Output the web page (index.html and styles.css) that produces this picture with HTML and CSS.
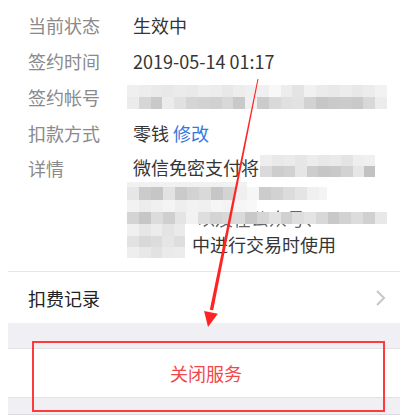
FILE: index.html
```html
<!DOCTYPE html>
<html lang="zh-CN">
<head>
<meta charset="utf-8">
<title>免密支付</title>
<link rel="stylesheet" href="styles.css">
</head>
<body>
<div class="page">
  <div class="info">
    <div class="row"><span class="label">当前状态</span><span class="value">生效中</span></div>
    <div class="row"><span class="label">签约时间</span><span class="value">2019-05-14 01:17</span></div>
    <div class="row"><span class="label">签约帐号</span>
      <span class="value">
        <svg class="mosaic-account" viewBox="0 0 22 2" preserveAspectRatio="none" shape-rendering="crispEdges">
          <rect x="0" y="0" width="1" height="1" fill="#efefef"/><rect x="1" y="0" width="1" height="1" fill="#ededed"/><rect x="2" y="0" width="1" height="1" fill="#eaeaea"/><rect x="3" y="0" width="1" height="1" fill="#e8e8e8"/><rect x="4" y="0" width="1" height="1" fill="#ebebeb"/><rect x="5" y="0" width="1" height="1" fill="#e9e9e9"/><rect x="6" y="0" width="1" height="1" fill="#eeeeee"/><rect x="7" y="0" width="1" height="1" fill="#ececec"/><rect x="8" y="0" width="1" height="1" fill="#e8e8e8"/><rect x="9" y="0" width="1" height="1" fill="#ededed"/><rect x="10" y="0" width="1" height="1" fill="#efefef"/><rect x="11" y="0" width="1" height="1" fill="#f0f0f0"/><rect x="12" y="0" width="1" height="1" fill="#f8f8f8"/><rect x="13" y="0" width="1" height="1" fill="#ededed"/><rect x="14" y="0" width="1" height="1" fill="#e4e4e4"/><rect x="15" y="0" width="1" height="1" fill="#f1f1f1"/><rect x="16" y="0" width="1" height="1" fill="#ebebeb"/><rect x="17" y="0" width="1" height="1" fill="#e9e9e9"/><rect x="18" y="0" width="1" height="1" fill="#ececec"/><rect x="19" y="0" width="1" height="1" fill="#e8e8e8"/><rect x="20" y="0" width="1" height="1" fill="#ececec"/><rect x="21" y="0" width="1" height="1" fill="#f2f2f2"/>
          <rect x="0" y="1" width="1" height="1" fill="#ebebeb"/><rect x="1" y="1" width="1" height="1" fill="#d6d6d6"/><rect x="2" y="1" width="1" height="1" fill="#c9c9c9"/><rect x="3" y="1" width="1" height="1" fill="#ececec"/><rect x="4" y="1" width="1" height="1" fill="#e1e1e1"/><rect x="5" y="1" width="1" height="1" fill="#d5d5d5"/><rect x="6" y="1" width="1" height="1" fill="#d2d2d2"/><rect x="7" y="1" width="1" height="1" fill="#d0d0d0"/><rect x="8" y="1" width="1" height="1" fill="#d8d8d8"/><rect x="9" y="1" width="1" height="1" fill="#c9c9c9"/><rect x="10" y="1" width="1" height="1" fill="#f0f0f0"/><rect x="11" y="1" width="1" height="1" fill="#cbcbcb"/><rect x="12" y="1" width="1" height="1" fill="#d9d9d9"/><rect x="13" y="1" width="1" height="1" fill="#e0e0e0"/><rect x="14" y="1" width="1" height="1" fill="#e2e2e2"/><rect x="15" y="1" width="1" height="1" fill="#d2d2d2"/><rect x="16" y="1" width="1" height="1" fill="#c6c6c6"/><rect x="17" y="1" width="1" height="1" fill="#cacaca"/><rect x="18" y="1" width="1" height="1" fill="#cbcbcb"/><rect x="19" y="1" width="1" height="1" fill="#c9c9c9"/><rect x="20" y="1" width="1" height="1" fill="#d8d8d8"/><rect x="21" y="1" width="1" height="1" fill="#ececec"/>
        </svg>
      </span>
    </div>
    <div class="row"><span class="label">扣款方式</span><span class="value">零钱 <a class="link">修改</a></span></div>
    <div class="row detail"><span class="label">详情</span>
      <div class="value detail-text">
        <div class="line">微信免密支付将</div>
        <div class="line"></div>
        <div class="line indent-3"><span class="smudge">以及在公众号、</span></div>
        <div class="line indent-4">中进行交易时使用</div>
        <svg class="mosaic-detail" viewBox="0 0 260 103" shape-rendering="crispEdges">
          <!-- line 1 -->
          <rect x="133" y="0" width="12" height="11" fill="#eeeeee"/><rect x="145" y="0" width="12" height="11" fill="#e9e9e9"/><rect x="157" y="0" width="11" height="11" fill="#ebebeb"/><rect x="168" y="0" width="12" height="11" fill="#e6e6e6"/><rect x="180" y="0" width="11" height="11" fill="#ececec"/><rect x="191" y="0" width="12" height="11" fill="#e8e8e8"/><rect x="203" y="0" width="11" height="11" fill="#eaeaea"/><rect x="214" y="0" width="12" height="11" fill="#e4e4e4"/><rect x="226" y="0" width="11" height="11" fill="#eeeeee"/><rect x="237" y="0" width="11" height="11" fill="#f0f0f0"/>
          <rect x="133" y="11" width="12" height="11" fill="#dadada"/><rect x="145" y="11" width="12" height="11" fill="#cdcdcd"/><rect x="157" y="11" width="11" height="11" fill="#d1d1d1"/><rect x="168" y="11" width="12" height="11" fill="#e6e6e6"/><rect x="180" y="11" width="11" height="11" fill="#cdcdcd"/><rect x="191" y="11" width="12" height="11" fill="#c6c6c6"/><rect x="203" y="11" width="11" height="11" fill="#c9c9c9"/><rect x="214" y="11" width="12" height="11" fill="#d2d2d2"/><rect x="226" y="11" width="11" height="11" fill="#e6e6e6"/><rect x="237" y="11" width="11" height="11" fill="#c2c2c2"/>
          <!-- light strip -->
          <rect x="0" y="27" width="120" height="5" fill="#f1f1f1"/>
          <!-- line 2 -->
          <rect x="0" y="32" width="12" height="13" fill="#e6e6e6"/><rect x="12" y="32" width="12" height="13" fill="#cbcbcb"/><rect x="24" y="32" width="12" height="13" fill="#c6c6c6"/><rect x="36" y="32" width="12" height="13" fill="#e2e2e2"/><rect x="48" y="32" width="12" height="13" fill="#cacaca"/><rect x="60" y="32" width="12" height="13" fill="#d2d2d2"/><rect x="72" y="32" width="12" height="13" fill="#d9d9d9"/><rect x="84" y="32" width="12" height="13" fill="#c6c6c6"/><rect x="96" y="32" width="12" height="13" fill="#d3d3d3"/><rect x="108" y="32" width="12" height="13" fill="#efefef"/><rect x="120" y="32" width="12" height="13" fill="#f6f6f6"/><rect x="132" y="32" width="12" height="13" fill="#cccccc"/><rect x="144" y="32" width="12" height="13" fill="#d2d2d2"/><rect x="156" y="32" width="12" height="13" fill="#dcdcdc"/><rect x="168" y="32" width="12" height="13" fill="#e4e4e4"/><rect x="180" y="32" width="12" height="13" fill="#f0f0f0"/><rect x="192" y="32" width="8" height="13" fill="#f4f4f4"/>
          <!-- light row -->
          <rect x="0" y="45" width="12" height="12" fill="#f2f2f2"/><rect x="12" y="45" width="12" height="12" fill="#ececec"/><rect x="24" y="45" width="12" height="12" fill="#f0f0f0"/><rect x="36" y="45" width="12" height="12" fill="#f4f4f4"/><rect x="48" y="45" width="12" height="12" fill="#eeeeee"/><rect x="60" y="45" width="12" height="12" fill="#f2f2f2"/><rect x="72" y="45" width="12" height="12" fill="#f0f0f0"/><rect x="84" y="45" width="12" height="12" fill="#f5f5f5"/><rect x="96" y="45" width="12" height="12" fill="#f3f3f3"/><rect x="108" y="45" width="12" height="12" fill="#f6f6f6"/><rect x="120" y="45" width="10" height="12" fill="#f8f8f8"/>
          <!-- line 3 -->
          <rect x="0" y="57" width="12" height="12" fill="#d4d4d4"/><rect x="12" y="57" width="12" height="12" fill="#c6c6c6"/><rect x="24" y="57" width="12" height="12" fill="#dcdcdc"/><rect x="36" y="57" width="12" height="12" fill="#cfcfcf"/><rect x="48" y="57" width="11" height="12" fill="#e4e4e4"/><rect x="59" y="57" width="12" height="12" fill="#f2f2f2"/><rect x="71" y="57" width="12" height="12" fill="#dedede"/><rect x="83" y="57" width="12" height="12" fill="#d4d4d4"/><rect x="95" y="57" width="11" height="12" fill="#d8d8d8"/><rect x="106" y="57" width="12" height="12" fill="#dadada"/><rect x="118" y="57" width="12" height="12" fill="#c8c8c8"/><rect x="130" y="57" width="12" height="12" fill="#d6d6d6"/><rect x="142" y="57" width="12" height="12" fill="#e2e2e2"/><rect x="154" y="57" width="11" height="12" fill="#d0d0d0"/><rect x="165" y="57" width="12" height="12" fill="#dedede"/><rect x="177" y="57" width="12" height="12" fill="#e4e4e4"/><rect x="189" y="57" width="12" height="12" fill="#d8d8d8"/><rect x="201" y="57" width="11" height="12" fill="#c8c8c8"/><rect x="212" y="57" width="12" height="12" fill="#d2d2d2"/><rect x="224" y="57" width="12" height="12" fill="#dcdcdc"/><rect x="236" y="57" width="12" height="12" fill="#d0d0d0"/><rect x="248" y="57" width="12" height="12" fill="#e8e8e8"/>
          <!-- left column -->
          <rect x="0" y="69" width="12" height="12" fill="#f0f0f0"/><rect x="12" y="69" width="12" height="12" fill="#e6e6e6"/><rect x="24" y="69" width="11" height="12" fill="#ececec"/><rect x="35" y="69" width="12" height="12" fill="#e4e4e4"/><rect x="47" y="69" width="11" height="12" fill="#eaeaea"/>
          <rect x="0" y="81" width="12" height="11" fill="#e2e2e2"/><rect x="12" y="81" width="12" height="11" fill="#d8d8d8"/><rect x="24" y="81" width="11" height="11" fill="#dcdcdc"/><rect x="35" y="81" width="12" height="11" fill="#e6e6e6"/><rect x="47" y="81" width="11" height="11" fill="#dedede"/>
          <rect x="0" y="92" width="12" height="11" fill="#eeeeee"/><rect x="12" y="92" width="12" height="11" fill="#e8e8e8"/><rect x="24" y="92" width="11" height="11" fill="#e2e2e2"/><rect x="35" y="92" width="12" height="11" fill="#eaeaea"/><rect x="47" y="92" width="11" height="11" fill="#ececec"/>
        </svg>
      </div>
    </div>
  </div>
  <div class="record">
    <span>扣费记录</span>
    <svg class="chevron" viewBox="0 0 9 16"><polyline points="1,1 8,8 1,15" fill="none" stroke="#c7c7cc" stroke-width="2"/></svg>
  </div>
  <div class="gap"></div>
  <div class="action">关闭服务</div>
  <div class="gap gap-bottom"></div>
</div>
<div class="annot-box"></div>
<svg class="arrow" viewBox="0 0 400 420">
  <polygon points="258.5,79.1 257.5,78.9 209.8,309.7 213.2,310.3" fill="#ff2424"/>
  <polygon points="208,327 204.1,310.9 217.9,313.7" fill="#ff2424"/>
</svg>
</body>
</html>
```
FILE: styles.css
```css
* { box-sizing: border-box; }
html, body { margin: 0; padding: 0; }
body {
  width: 400px;
  height: 420px;
  overflow: hidden;
  position: relative;
  background: #fff;
  font-family: "Noto Sans CJK SC", "Noto Sans", sans-serif;
}
.page { margin-left: 8px; }
.info {
  padding-top: 7px;
  padding-bottom: 14px;
  border-bottom: 1px solid #e6e6e6;
}
.row {
  display: flex;
  align-items: center;
  min-height: 36px;
  padding: 5px 0 5px 20px;
  font-size: 18px;
  line-height: 26px;
}
.label { width: 105px; flex: none; color: #8a8a8a; }
.value { color: #353535; }
.link { color: #3478e0; text-decoration: none; }
.mosaic-account {
  display: block;
  width: 260px;
  height: 24px;
  margin-left: -6px;
}
.row.detail { align-items: flex-start; padding-top: 4px; padding-bottom: 0; }
.detail-text { position: relative; line-height: 25.5px; }
.line { height: 25.5px; white-space: nowrap; }
.indent-3 { padding-left: 64px; }
.indent-4 { padding-left: 59px; }
.smudge { color: #666; filter: blur(0.6px); }
.mosaic-detail {
  position: absolute;
  left: -6px;
  top: 0;
  width: 260px;
  height: 103px;
}
.record {
  display: flex;
  align-items: center;
  justify-content: space-between;
  height: 51px;
  padding: 0 15px 0 20px;
  font-size: 18px;
  color: #222;
}
.chevron { width: 9px; height: 16px; display: block; }
.gap { height: 25px; background: #efeff4; }
.action {
  height: 50px;
  border-top: 1px solid #e3e3e6;
  border-bottom: 1px solid #e3e3e6;
  display: flex;
  align-items: center;
  justify-content: center;
  padding-left: 4px;
  color: #f2474a;
  font-size: 18px;
}
.gap-bottom { height: 17px; border-bottom: 1px solid #dcdce0; }
.annot-box {
  position: absolute;
  left: 32px;
  top: 341px;
  width: 353px;
  height: 71px;
  border: 2px solid #ff3a3a;
}
.arrow {
  position: absolute;
  left: 0;
  top: 0;
  width: 400px;
  height: 420px;
  pointer-events: none;
}
```
